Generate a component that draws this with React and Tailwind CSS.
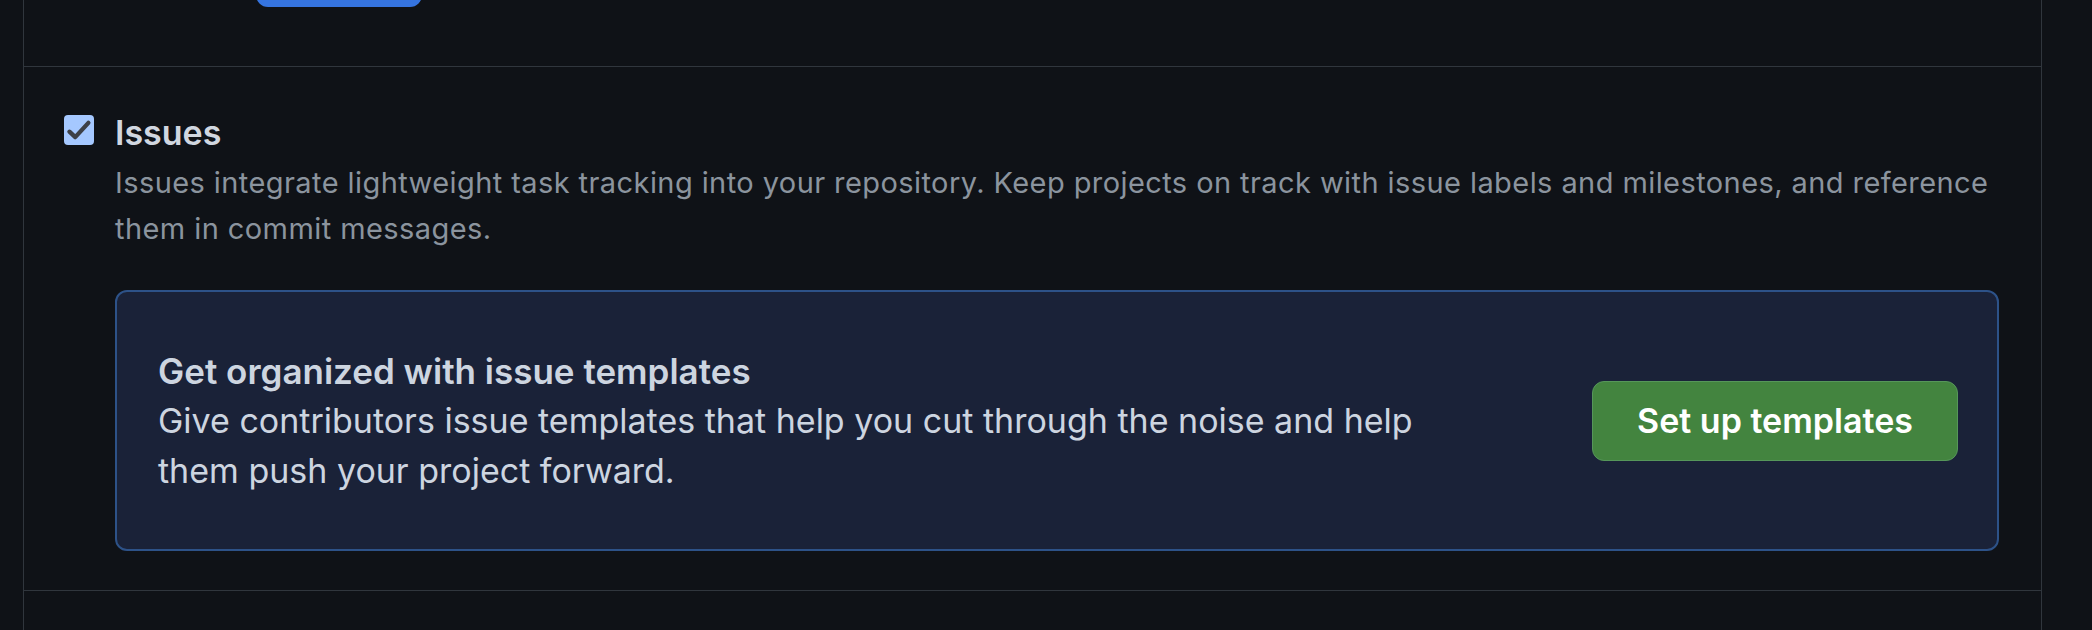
import React from "react";

export default function App() {
  return (
    <div className="w-[2092px] h-[630px] overflow-hidden bg-[#0f1217]" style={{ fontFamily: "Inter, 'Noto Sans', sans-serif" }}>
      <div className="ml-[23px] w-[2019px] h-[630px] border-x border-[#30363d]">
        <div className="h-[67px] border-b border-[#30363d] pl-[232px] flex items-start">
          <div className="mt-[-43px] w-[166px] h-[50px] rounded-[12px] bg-[#3574e0]"></div>
        </div>
        <div className="pt-[48px] pb-[39px] pl-[40px] pr-[42px] border-b border-[#30363d] flex gap-[21px]">
          <div className="w-[30px] h-[30px] rounded-[4px] bg-[#a5c8ff] shrink-0">
            <svg width="30" height="30" viewBox="0 0 16 16" fill="none">
              <path d="M2.9 8.9 L6 11.8 L13 4.2" stroke="#3d4047" strokeWidth="2.3" strokeLinecap="round" strokeLinejoin="round" />
            </svg>
          </div>
          <div className="flex-1 min-w-0">
            <div className="text-[34px] leading-[40px] font-semibold text-[#d1d7e0] mt-[-2px]">Issues</div>
            <div className="mt-[7px] text-[29px] leading-[46px] tracking-[0.42px] text-[#8b949e]">
              Issues integrate lightweight task tracking into your repository. Keep projects on track with issue labels and milestones, and reference them in commit messages.
            </div>
            <div className="mt-[38px] h-[261px] rounded-[12px] border-2 border-[#2d5288] bg-[#1a2238] flex items-center justify-between pl-[41px] pr-[39px]">
              <div className="w-[1320px] text-[#cdd5e0]">
                <div className="text-[35px] leading-[50px] font-semibold">Get organized with issue templates</div>
                <div className="text-[34px] leading-[50px]">
                  Give contributors issue templates that help you cut through the noise and help them push your project forward.
                </div>
              </div>
              <button className="w-[366px] h-[80px] rounded-[12px] bg-[#43843f] border border-[#56965a] text-white text-[34px] font-semibold">
                Set up templates
              </button>
            </div>
          </div>
        </div>
      </div>
    </div>
  );
}
